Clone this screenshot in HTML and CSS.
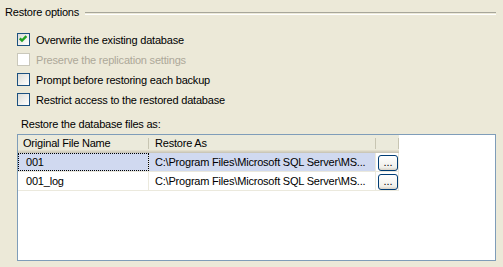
FILE: index.html
```html
<!DOCTYPE html>
<html lang="en">
<head>
  <meta charset="UTF-8">
  <title>Restore options</title>
  <link rel="stylesheet" href="styles.css">
</head>
<body>

<div class="page">
  <div class="group-title">
    <span class="group-text">Restore options</span>
    <span class="rule"></span>
  </div>

  <div class="options">
    <div class="opt">
      <span class="box">
        <svg width="11" height="11" viewBox="0 0 11 11"><path d="M1.8 4.4 L4 6.6 L8.4 2.2" fill="none" stroke="#21a121" stroke-width="2.4"/></svg>
      </span>
      <span>Overwrite the existing database</span>
    </div>
    <div class="opt disabled">
      <span class="box"></span>
      <span>Preserve the replication settings</span>
    </div>
    <div class="opt">
      <span class="box"></span>
      <span>Prompt before restoring each backup</span>
    </div>
    <div class="opt">
      <span class="box"></span>
      <span>Restrict access to the restored database</span>
    </div>
  </div>

  <div class="files-label">Restore the database files as:</div>

  <div class="grid">
    <div class="grid-head">
      <div class="cell c1">Original File Name</div>
      <div class="cell c2">Restore As</div>
      <div class="cell c3"></div>
    </div>
    <div class="grid-row selected">
      <div class="cell c1 focus">001</div>
      <div class="cell c2">C:\Program Files\Microsoft SQL Server\MS...</div>
      <div class="cell c3"><span class="dots">...</span></div>
    </div>
    <div class="grid-row">
      <div class="cell c1">001_log</div>
      <div class="cell c2">C:\Program Files\Microsoft SQL Server\MS...</div>
      <div class="cell c3"><span class="dots">...</span></div>
    </div>
  </div>
</div>

</body>
</html>
```

FILE: styles.css
```css
body {
  margin: 0;
  padding: 0;
  background-color: #ece9d8; /* XP dialog face */
  font-family: 'Liberation Sans', Arial, sans-serif;
  font-size: 11px;
  letter-spacing: -0.2px;
  color: #000;
}
.page {
  width: 503px;
  height: 267px;
  overflow: hidden;
}
.group-title {
  display: flex;
  align-items: center;
  height: 13px;
  margin-top: 6px;
  padding-left: 5px;
  padding-right: 7px;
}
.group-text {
  line-height: 13px;
  padding-right: 6px;
}
.rule {
  flex: 1;
  height: 1px;
  border-top: 1px solid #a7a69a;
  border-bottom: 1px solid #fff;
  margin-top: 1px;
}
.options {
  margin-top: 11px;
  padding-left: 17px;
}
.opt {
  display: flex;
  align-items: flex-start;
  height: 20px;
  line-height: 20px;
}
.opt .box {
  width: 11px;
  height: 11px;
  margin-top: 3px;
  margin-right: 6px;
  border: 1px solid #1c5180;
  background: linear-gradient(135deg, #dcdcd7 0%, #f6f6f4 70%, #fff 100%);
  display: flex;
}
.opt.disabled {
  color: #aca899;
}
.opt.disabled .box {
  border-color: #cac8bb;
  background: #fff;
}
.files-label {
  margin-top: 7px;
  padding-left: 21px;
  line-height: 14px;
}
.grid {
  margin-top: 3px;
  margin-left: 17px;
  width: 477px;
  height: 125px;
  border: 1px solid #7f9db9;
  background-color: #fff;
}
.grid-head,
.grid-row {
  display: flex;
  width: 381px;
}
.grid-head {
  height: 18px;
  background-color: #ebeadb;
  box-shadow: inset 0 -1px #cbc7b8, inset 0 -2px #d6d2c2, inset 0 -3px #e2decd;
}
.grid-head .cell {
  line-height: 16px;
  position: relative;
}
.grid-head .cell::after {
  content: '';
  position: absolute;
  right: 0;
  top: 3px;
  height: 11px;
  width: 1px;
  background-color: #c7c5b2;
  box-shadow: 1px 0 #fff;
}
.grid-head .c1 {
  padding-left: 5px;
}
.grid-row {
  height: 18px;
  border-bottom: 1px solid #ebe9dd;
}
.cell {
  box-sizing: border-box;
  white-space: nowrap;
  overflow: hidden;
}
.grid-row .cell {
  line-height: 18px;
  border-right: 1px solid #ebe9dd;
}
.c1 {
  width: 131px;
  padding-left: 8px;
}
.c2 {
  width: 227px;
  padding-left: 6px;
}
.c3 {
  width: 23px;
  padding-left: 2px;
}
.grid-row.selected .c1,
.grid-row.selected .c2 {
  background-color: #d0d9f0;
}
.cell.focus {
  outline: 1px dotted #000;
  outline-offset: -1px;
}
.dots {
  display: block;
  box-sizing: border-box;
  width: 20px;
  height: 16px;
  margin-top: 2px;
  border: 1px solid #003c74;
  border-radius: 3px;
  background: linear-gradient(#fff, #f0f0ea 80%, #d6d0c5);
  text-align: center;
  line-height: 12px;
  letter-spacing: 0;
}
```
